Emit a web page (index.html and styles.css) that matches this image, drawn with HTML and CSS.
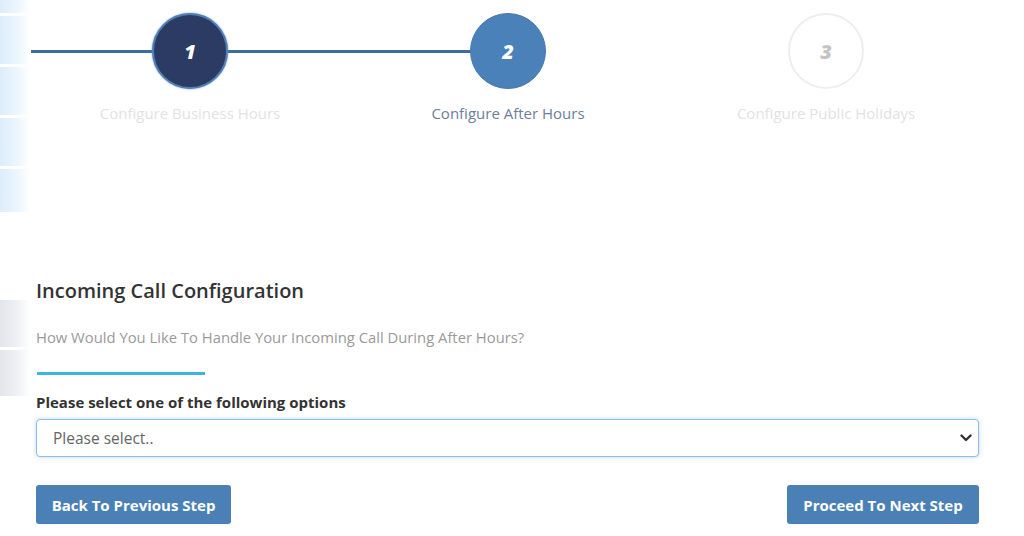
FILE: index.html
```html
<!DOCTYPE html>
<html>
<head>
    <title>After Hours Setup</title>
    <meta name="viewport" content="width=device-width, initial-scale=1.0">
    <link rel="stylesheet" href="styles.css">
</head>
<body>
    <div id="page">
        <div class="edge">
            <div class="edge-blue">
                <span></span><span></span><span></span><span></span>
            </div>
            <div class="edge-gray">
                <span></span>
            </div>
        </div>

        <div id="main">
            <div class="steps">
                <div class="step done">
                    <div class="line full"></div>
                    <div class="circle">1</div>
                    <div class="step-label">Configure Business Hours</div>
                </div>
                <div class="step current">
                    <div class="line half"></div>
                    <div class="circle">2</div>
                    <div class="step-label">Configure After Hours</div>
                </div>
                <div class="step">
                    <div class="circle">3</div>
                    <div class="step-label">Configure Public Holidays</div>
                </div>
            </div>

            <div class="form">
                <h2>Incoming Call Configuration</h2>
                <p class="question">How Would You Like To Handle Your Incoming Call During After Hours?</p>
                <div class="accent"></div>

                <label for="option">Please select one of the following options</label>
                <div class="select-wrap">
                    <select id="option">
                        <option value="" selected>Please select..</option>
                        <option value="vm">Send to voicemail</option>
                        <option value="fwd">Forward to another number</option>
                    </select>
                    <svg class="chevron" width="12" height="8" viewBox="0 0 12 8">
                        <path d="M1.5 1.5 L6 6 L10.5 1.5" fill="none" stroke="#333" stroke-width="2.4" stroke-linecap="round" stroke-linejoin="round"/>
                    </svg>
                </div>

                <div class="buttons">
                    <button class="back">Back To Previous Step</button>
                    <button class="next">Proceed To Next Step</button>
                </div>
            </div>
        </div>
    </div>
</body>
</html>
```

FILE: styles.css
```css
body {
    font-family: "Open Sans", Lato, sans-serif;
    background-color: #fff;
    margin: 0;
    padding: 0;
    color: #333;
}
#page {
    display: flex;
    width: 1024px;
    height: 536px;
    overflow: hidden;
}
.edge {
    width: 30px;
    flex-shrink: 0;
    display: flex;
    flex-direction: column;
}
.edge-blue {
    height: 212px;
    box-sizing: border-box;
    background: linear-gradient(to right, #dcedfa, #edf6fd 60%, #fff);
    display: flex;
    flex-direction: column;
    gap: 48px;
    padding-top: 13px;
}
.edge-blue span,
.edge-gray span {
    display: block;
    height: 3px;
    background: linear-gradient(to right, #fff 70%, rgba(255,255,255,0));
}
.edge-gray {
    margin-top: 88px;
    height: 96px;
    background: linear-gradient(to right, #e3e5eb, #eff1f5 60%, #fff);
    padding-top: 47px;
    box-sizing: border-box;
}
#main {
    width: 954px;
    margin-left: 1px;
}
.steps {
    display: flex;
    padding-top: 13px;
}
.step {
    width: 318px;
    display: flex;
    flex-direction: column;
    align-items: center;
    position: relative;
}
.line {
    position: absolute;
    top: 37px;
    left: 0;
    height: 3px;
    background-color: #3d6d9e;
}
.line.full {
    width: 100%;
}
.line.half {
    width: 50%;
}
.circle {
    position: relative;
    width: 76px;
    height: 76px;
    box-sizing: border-box;
    border-radius: 50%;
    border: 2px solid #eeeeee;
    background-color: #fff;
    color: #c4c4c4;
    font-size: 20px;
    font-weight: 800;
    font-style: italic;
    display: flex;
    align-items: center;
    justify-content: center;
}
.step.done .circle {
    background-color: #2c3b63;
    border: 2px solid #4f7fb3;
    box-shadow: 0 0 2px #5b88bb;
    color: #fff;
}
.step.current .circle {
    background-color: #4a81b8;
    border: 1px solid #4479b0;
    color: #fff;
}
.step-label {
    margin-top: 14px;
    font-size: 15px;
    line-height: 20px;
    color: #e2e2e2;
}
.step.current .step-label {
    color: #6c7e9c;
}
.form {
    padding-left: 5px;
    width: 943px;
    margin-top: 155px;
}
h2 {
    margin: 0;
    font-size: 20px;
    line-height: 26px;
    font-weight: 600;
    color: #333;
}
.question {
    margin: 23px 0 0;
    font-size: 14.8px;
    line-height: 20px;
    color: #9a9a9a;
}
.accent {
    margin: 25px 0 0 1px;
    width: 168px;
    height: 3px;
    background-color: #3cb4df;
}
label {
    display: block;
    margin-top: 17px;
    font-size: 15px;
    line-height: 20px;
    font-weight: bold;
    color: #333;
}
.select-wrap {
    position: relative;
    margin-top: 7px;
}
select {
    width: 100%;
    height: 38px;
    padding: 0 16px;
    font-family: "Open Sans", Lato, sans-serif;
    font-size: 15.5px;
    color: #666;
    background-color: #fff;
    border: 1px solid #8fbde6;
    border-radius: 4px;
    box-shadow: 0 0 4px rgba(102, 170, 230, 0.45);
    appearance: none;
    -webkit-appearance: none;
}
.chevron {
    position: absolute;
    right: 7px;
    top: 15px;
}
.buttons {
    display: flex;
    justify-content: space-between;
    margin-top: 28px;
}
button {
    height: 39px;
    padding: 0 10px;
    border: none;
    border-radius: 3px;
    background-color: #4a80b6;
    color: #fff;
    font-family: "Open Sans", Lato, sans-serif;
    font-size: 15px;
    font-weight: bold;
    cursor: pointer;
}
.back {
    width: 195px;
}
.next {
    width: 192px;
}
```
